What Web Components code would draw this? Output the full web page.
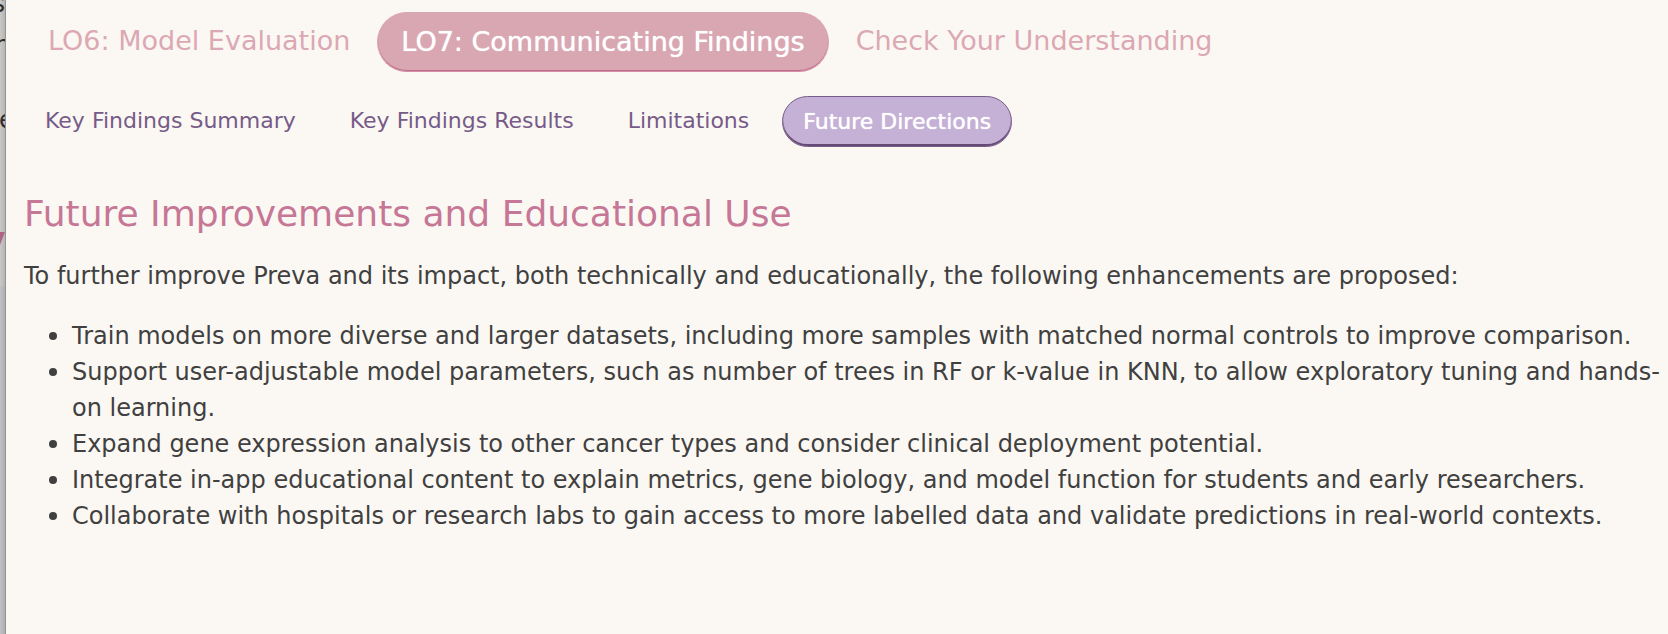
<!DOCTYPE html>
<html lang="en">
<head>
<meta charset="utf-8">
<title>Future Directions</title>
<style>
  html, body { margin: 0; min-height: 100%; background: #fbf8f3; }
  body { font-family: "DejaVu Sans", sans-serif; color: #404040; }
</style>
</head>
<body>
<app-shell>
  <page-behind slot="behind"></page-behind>
  <tab-list label="Learning outcomes">
    <tab-item>LO6: Model Evaluation</tab-item>
    <tab-item active>LO7: Communicating Findings</tab-item>
    <tab-item>Check Your Understanding</tab-item>
  </tab-list>
  <tab-list label="Communicating findings" small>
    <tab-item small>Key Findings Summary</tab-item>
    <tab-item small>Key Findings Results</tab-item>
    <tab-item small>Limitations</tab-item>
    <tab-item small active>Future Directions</tab-item>
  </tab-list>
  <content-section heading="Future Improvements and Educational Use">
    <span slot="intro">To further improve Preva and its impact, both technically and educationally, the following enhancements are proposed:</span>
    <bullet-list></bullet-list>
  </content-section>
</app-shell>

<script>
const mount = (el, html) => { el.attachShadow({ mode: "open" }).innerHTML = html; };

customElements.define("app-shell", class extends HTMLElement {
  connectedCallback() {
    mount(this, `<style>
      :host { display: grid; grid-template-columns: 6px minmax(0, 1fr); min-height: 100vh; }
      main { padding: 12px 4px 24px 18px; background: #fbf8f3; }
    </style><slot name="behind"></slot><main><slot></slot></main>`);
  }
});

/* Sliver of the dimmed page that the panel covers */
customElements.define("page-behind", class extends HTMLElement {
  connectedCallback() {
    mount(this, `<style>
      :host { display: block; position: relative; overflow: hidden; color: #2c2c2c;
        border-right: 1px solid #949494; box-sizing: border-box;
        background: linear-gradient(90deg, transparent, #0000001a), linear-gradient(#cbc9c6 286px, #c2c2c4 286px); }
      span { position: absolute; font-size: 24px; line-height: 36px; white-space: nowrap; }
      .s { top: -14px; right: 0; }
      .n { top: 27px; left: -5px; height: 18px; overflow: hidden; }
      .e { top: 102px; left: -1px; }
      .v { top: 221px; left: -13px; color: #b0647f; font-size: 28px; font-weight: bold; }
    </style>
    <span class="s">s</span><span class="n">n</span><span class="e">e</span><span class="v">v</span>`);
  }
});

customElements.define("tab-list", class extends HTMLElement {
  connectedCallback() {
    mount(this, `<style>
      :host { display: block; margin-bottom: 24px; }
      :host([small]) { margin-bottom: 40px; }
      div { display: flex; flex-wrap: wrap; gap: 3px; }
      :host([small]) div { gap: 12px; }
    </style><div role="tablist" aria-label="${this.getAttribute("label")}"><slot></slot></div>`);
  }
});

customElements.define("tab-item", class extends HTMLElement {
  connectedCallback() {
    const active = this.hasAttribute("active");
    mount(this, `<style>
      :host { display: block; }
      button { display: block; margin: 0; padding: 12px 23px 14px; border: 1px solid transparent;
        border-radius: 30px; background: none; font: inherit; font-size: 27px; line-height: 32px;
        color: #dba8b3; white-space: nowrap; cursor: pointer; }
      :host([active]) button { padding-top: 13px; padding-bottom: 13px; color: #fff; background: #d9a7b1;
        border-color: #d9a7b1; border-bottom-color: #d48fa6; box-shadow: inset 0 -1px #bd6a8d;
        text-shadow: 0 0 1px #fff; }
      :host([small]) button { padding: 10px 20px 11px; font-size: 22px; line-height: 28px; color: #765b88; }
      :host([small][active]) button { padding-top: 11px; padding-bottom: 10px; color: #fff; background: #c5b0d6;
        border-color: #765b88; box-shadow: inset 0 -2px #654a76; }
    </style><button type="button" role="tab" aria-selected="${active}"><slot></slot></button>`);
  }
});

customElements.define("content-section", class extends HTMLElement {
  connectedCallback() {
    mount(this, `<style>
      :host { display: block; }
      h2 { margin: 0 0 17px; font-size: 36px; line-height: 54px; font-weight: normal; color: #c67796; }
      p { margin: 0 0 24px; font-size: 24px; line-height: 36px; }
    </style><h2>${this.getAttribute("heading")}</h2><p><slot name="intro"></slot></p><slot></slot>`);
  }
});

const ITEMS = [
  "Train models on more diverse and larger datasets, including more samples with matched normal controls to improve comparison.",
  "Support user-adjustable model parameters, such as number of trees in RF or k-value in KNN, to allow exploratory tuning and hands-on learning.",
  "Expand gene expression analysis to other cancer types and consider clinical deployment potential.",
  "Integrate in-app educational content to explain metrics, gene biology, and model function for students and early researchers.",
  "Collaborate with hospitals or research labs to gain access to more labelled data and validate predictions in real-world contexts."
];
customElements.define("bullet-list", class extends HTMLElement {
  connectedCallback() {
    mount(this, `<style>
      :host { display: block; }
      ul { margin: 0; padding: 0 0 0 48px; list-style: none; font-size: 24px; line-height: 36px; }
      li::before { content: ""; float: left; width: 8px; height: 8px; margin: 14px 0 0 -23px;
        border-radius: 50%; background: #404040; }
    </style><ul>${ITEMS.map(t => `<li>${t}</li>`).join("")}</ul>`);
  }
});
</script>
</body>
</html>
